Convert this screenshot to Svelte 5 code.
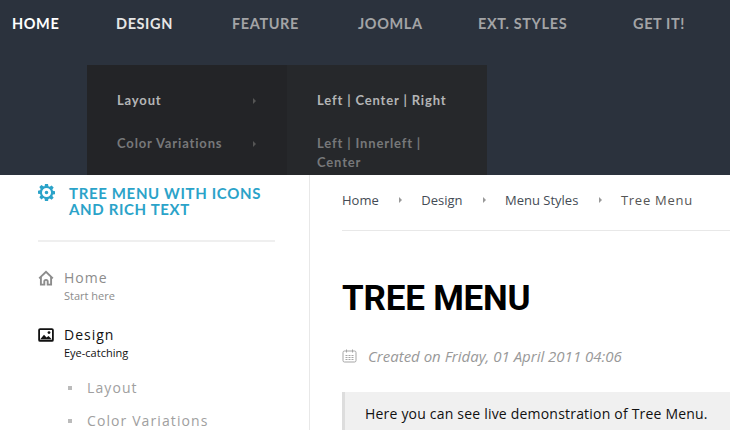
<script lang="ts">
  const nav = ['HOME', 'DESIGN', 'FEATURE', 'JOOMLA', 'EXT. STYLES', 'GET IT!']
  const crumbs = ['Home', 'Design', 'Menu Styles', 'Tree Menu']
</script>

<div class="page">
  <header class="top">
    <nav class="nav">
      {#each nav as item, i}
        <a class="nav-item" class:home={i === 0} class:open={i === 1}>{item}</a>
      {/each}
    </nav>

    <div class="dropdown">
      <ul class="col">
        <li class="active">Layout<span class="caret"></span></li>
        <li>Color Variations<span class="caret"></span></li>
      </ul>
      <ul class="col second">
        <li class="active">Left | Center | Right</li>
        <li>Left | Innerleft | Center</li>
      </ul>
    </div>
  </header>

  <div class="body">
    <aside class="side">
      <div class="side-title">
        <svg class="gear" viewBox="0 0 18 18" width="18" height="18">
          <path
            fill="#2ba3c9"
            fill-rule="evenodd"
            d="M7.4 0h3.2l.4 2.4 1.4.6 2-1.4 2.2 2.2-1.4 2 .6 1.4 2.2.4v3.2l-2.2.4-.6 1.4 1.4 2-2.2 2.2-2-1.4-1.4.6-.4 2.4H7.4L7 15.5l-1.4-.6-2 1.4-2.2-2.2 1.4-2-.6-1.4L0 10.3V7.1l2.2-.4.6-1.4-1.4-2 2.2-2.2 2 1.4L7 2.4zM9 4.2a4.8 4.8 0 1 0 0 9.6 4.8 4.8 0 0 0 0-9.6zm0 2.9a1.9 1.9 0 1 1 0 3.8 1.9 1.9 0 0 1 0-3.8z"
          />
        </svg>
        <h3>TREE MENU WITH ICONS AND RICH TEXT</h3>
      </div>

      <ul class="tree">
        <li class="tree-item">
          <svg class="tree-icon" viewBox="0 0 16 16" width="16" height="16" fill="none" stroke="#8c8c8c" stroke-width="1.9">
            <path d="M1.2 8.4 8 1.8l6.8 6.6" />
            <path d="M2.9 7v7.6h3.4v-3a1.7 1.7 0 0 1 3.4 0v3h3.4V7" />
          </svg>
          <div>
            <div class="tree-name">Home</div>
            <div class="tree-sub">Start here</div>
          </div>
        </li>
        <li class="tree-item current">
          <svg class="tree-icon" viewBox="0 0 16 16" width="16" height="16">
            <rect x="1.1" y="2.1" width="13.8" height="11.8" rx="1" fill="none" stroke="#111" stroke-width="1.8" />
            <path d="M2 12.5 6 7.8l2.5 2.6 2-1.4 3.5 3.5z" fill="#111" />
            <circle cx="11" cy="5.6" r="1.4" fill="#111" />
          </svg>
          <div>
            <div class="tree-name">Design</div>
            <div class="tree-sub">Eye-catching</div>
          </div>
        </li>
      </ul>

      <ul class="children">
        <li>Layout</li>
        <li>Color Variations</li>
      </ul>
    </aside>

    <main class="content">
      <div class="breadcrumb">
        {#each crumbs as crumb, i}
          {#if i > 0}<span class="crumb-sep"></span>{/if}
          <span class="crumb" class:last={i === crumbs.length - 1}>{crumb}</span>
        {/each}
      </div>

      <h1>TREE MENU</h1>

      <div class="meta">
        <svg viewBox="0 0 15 14" width="15" height="14" fill="none" stroke="#a5a5a5">
          <rect x="1" y="2" width="13" height="11" rx="1.5" />
          <path d="M4.5.5v3M10.5.5v3" />
          <path d="M3.5 6.5h8M3.5 8.5h8M3.5 10.5h8" stroke-dasharray="2 1" />
        </svg>
        <em>Created on Friday, 01 April 2011 04:06</em>
      </div>

      <blockquote>Here you can see live demonstration of Tree Menu.</blockquote>
    </main>
  </div>
</div>

<style>
  :global(body) {
    margin: 0;
    background: #fff;
  }

  .page {
    width: 730px;
    height: 430px;
    overflow: hidden;
    font-family: 'Open Sans', 'Liberation Sans', sans-serif;
    color: #333;
  }

  ul {
    list-style: none;
    margin: 0;
    padding: 0;
  }

  /* Header */
  .top {
    position: relative;
    height: 175px;
    overflow: hidden;
    background: #2b323d;
  }

  .nav {
    display: grid;
    grid-template-columns: 104px 116px 126px 120px 155px auto;
    padding: 15px 0 0 12px;
  }

  .nav-item {
    font-family: Lato, 'Liberation Sans', sans-serif;
    font-size: 14.5px;
    font-weight: 700;
    line-height: 18px;
    letter-spacing: 0.6px;
    color: #a3a4a6;
  }

  .nav-item.home {
    color: #fff;
  }

  .nav-item.open {
    color: #e6e6e6;
  }

  .dropdown {
    position: absolute;
    top: 65px;
    left: 87px;
    display: flex;
    height: 130px;
    font-family: Lato, 'Liberation Sans', sans-serif;
    font-size: 13px;
    font-weight: 700;
    letter-spacing: 0.85px;
    line-height: 19px;
    color: #77787a;
  }

  .col {
    position: relative;
    box-sizing: border-box;
    width: 200px;
    padding: 26px 30px 0;
    background: #232427;
  }

  .col.second {
    background: #26282b;
  }

  .col li {
    display: flex;
    justify-content: space-between;
    align-items: center;
    margin-bottom: 24px;
  }

  .col .active {
    color: #b4b5b6;
  }

  .caret {
    width: 0;
    height: 0;
    margin-right: 1px;
    border-left: 3px solid #555;
    border-top: 3px solid transparent;
    border-bottom: 3px solid transparent;
  }

  /* Layout under the header */
  .body {
    display: flex;
  }

  /* Sidebar */
  .side {
    box-sizing: border-box;
    width: 310px;
    height: 255px;
    padding: 10px 34px 0 38px;
    border-right: 1px solid #e8e8e8;
  }

  .side-title {
    display: flex;
    gap: 14px;
    padding-bottom: 23px;
    border-bottom: 2px solid #efefef;
  }

  .gear {
    flex: none;
    margin-top: -1px;
    width: 17px;
    height: 17px;
  }

  .side-title h3 {
    margin: 0;
    font-family: Lato, 'Liberation Sans', sans-serif;
    font-size: 15px;
    font-weight: 700;
    line-height: 16px;
    letter-spacing: 0.65px;
    color: #2ba3c9;
  }

  .tree {
    padding-top: 27px;
  }

  .tree-item {
    display: flex;
    gap: 10px;
    margin-bottom: 20px;
    color: #8c8c8c;
  }

  .tree-item.current {
    color: #111;
    margin-bottom: 15px;
  }

  .tree-icon {
    flex: none;
    margin-top: 1px;
  }

  .tree-name {
    font-size: 14px;
    line-height: 17px;
    letter-spacing: 1px;
  }

  .tree-sub {
    font-size: 11px;
    line-height: 20px;
  }

  .children {
    padding-left: 49px;
    color: #a0a0a0;
    font-size: 14px;
    letter-spacing: 1.1px;
  }

  .children li {
    position: relative;
    line-height: 19px;
    margin-bottom: 14px;
  }

  .children li::before {
    content: '';
    position: absolute;
    left: -19px;
    top: 8px;
    width: 4px;
    height: 4px;
    background: #bbb;
  }

  /* Content */
  .content {
    flex: 1;
    padding-left: 32px;
    min-width: 0;
  }

  .breadcrumb {
    box-sizing: content-box;
    display: flex;
    align-items: center;
    height: 49px;
    padding-bottom: 6px;
    border-bottom: 1px solid #e8e8e8;
    font-size: 13px;
    color: #444b55;
  }

  .crumb.last {
    letter-spacing: 0.75px;
    color: #555;
  }

  .crumb-sep {
    width: 0;
    height: 0;
    margin: 0 19px 0 20.5px;
    border-left: 3px solid #999;
    border-top: 3px solid transparent;
    border-bottom: 3px solid transparent;
  }

  h1 {
    margin: 47px 0 0;
    font-family: Roboto, 'Liberation Sans', sans-serif;
    font-size: 35px;
    font-weight: 700;
    line-height: 42px;
    letter-spacing: -0.2px;
    color: #000;
  }

  .meta {
    display: flex;
    align-items: center;
    gap: 11px;
    margin-top: 26px;
    font-size: 15px;
    line-height: 20px;
    color: #999;
  }

  blockquote {
    margin: 26px 0 0;
    padding: 12px 20px;
    border-left: 3px solid #ddd;
    background: #f0f0f0;
    font-size: 14px;
    line-height: 20px;
    letter-spacing: 0.2px;
    color: #111;
  }
</style>
